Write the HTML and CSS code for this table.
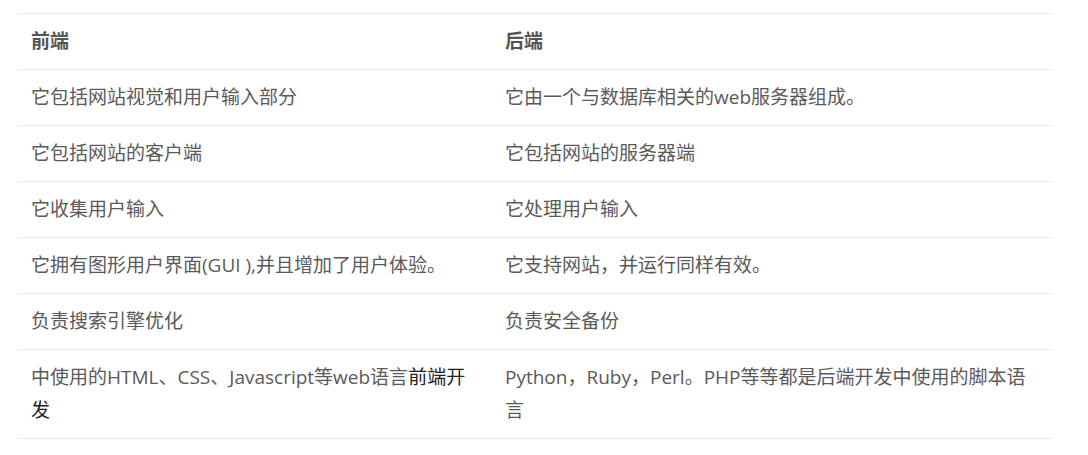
FILE: index.html
```html
<!DOCTYPE html>
<html lang="zh">
<head>
<meta charset="utf-8">
<link rel="stylesheet" href="styles.css">
</head>
<body>
<div class="wrap">
<table class="cmp">
<thead>
<tr><th class="c1">前端</th><th class="c2">后端</th></tr>
</thead>
<tbody>
<tr><td>它包括网站视觉和用户输入部分</td><td>它由一个与数据库相关的web服务器组成。</td></tr>
<tr><td>它包括网站的客户端</td><td>它包括网站的服务器端</td></tr>
<tr><td>它收集用户输入</td><td>它处理用户输入</td></tr>
<tr><td>它拥有图形用户界面(GUI ),并且增加了用户体验。</td><td>它支持网站，并运行同样有效。</td></tr>
<tr><td>负责搜索引擎优化</td><td>负责安全备份</td></tr>
<tr><td>中使用的HTML、CSS、Javascript等web语言<span class="dark">前端开发</span></td><td>Python，Ruby，Perl。PHP等等都是后端开发中使用的脚本语言</td></tr>
</tbody>
</table>
</div>
</body>
</html>
```

FILE: styles.css
```css
html, body {
  margin: 0;
  padding: 0;
  background: #fff;
}
.wrap {
  padding: 13px 36px 0 18px;
}
.cmp {
  width: 1034px;
  border-collapse: collapse;
  table-layout: fixed;
  font-family: "Open Sans", "Noto Sans CJK SC", sans-serif;
  font-size: 19px;
  line-height: 33px;
  color: #5a5a5a;
}
.cmp th, .cmp td {
  text-align: left;
  vertical-align: top;
  padding: 11px 13px;
  border-top: 1px solid #ebebeb;
  border-bottom: 1px solid #ebebeb;
}
.cmp th {
  font-weight: bold;
  color: #555;
}
.c1 { width: 448px; }
.c2 { width: 534px; }
.dark { color: #222; }
```
